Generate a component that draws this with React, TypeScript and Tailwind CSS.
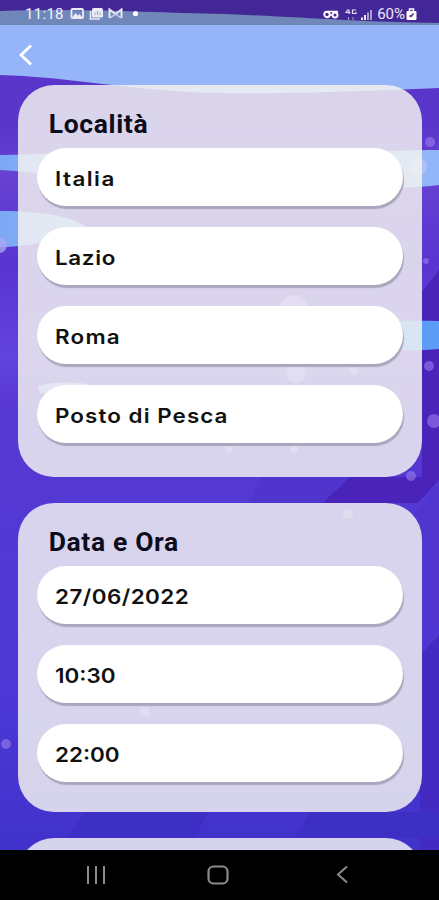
import type { ReactNode } from "react";

const sections = [
  { title: "Località", pad: "pb-[34px]", fields: ["Italia", "Lazio", "Roma", "Posto di Pesca"] },
  { title: "Data e Ora", pad: "pb-[30px]", fields: ["27/06/2022", "10:30", "22:00"] },
];

const spacing: Record<string, string> = {
  Italia: "tracking-[1.3px]",
  Lazio: "tracking-[0.6px]",
  Roma: "tracking-[1.1px]",
  "Posto di Pesca": "tracking-[0.95px]",
  "27/06/2022": "tracking-[0.4px]",
  "10:30": "tracking-[0px]",
  "22:00": "tracking-[0px]",
};

function Waves() {
  return (
    <svg className="absolute inset-0 h-[850px] w-full" viewBox="0 0 439 850" preserveAspectRatio="none" aria-hidden="true">
      <defs>
        <linearGradient id="sea" x1="0" y1="0" x2="0" y2="1">
          <stop offset="0" stopColor="#5b34c8" />
          <stop offset="0.15" stopColor="#5a36cc" />
          <stop offset="0.2" stopColor="#6742d2" />
          <stop offset="0.31" stopColor="#5934d0" />
          <stop offset="0.42" stopColor="#6144dc" />
          <stop offset="0.48" stopColor="#5738d2" />
          <stop offset="0.8" stopColor="#4e39d6" />
          <stop offset="1" stopColor="#4132cc" />
        </linearGradient>
        <linearGradient id="left" x1="0" y1="0" x2="1" y2="0">
          <stop offset="0" stopColor="#7ba7f4" />
          <stop offset="1" stopColor="#94b8f8" />
        </linearGradient>
      </defs>
      <rect width="439" height="850" fill="url(#sea)" />
      {/* darker bands on the right */}
      <path d="M439 270 L422 292 V477 H350 L322 503 H418 L439 480Z" fill="#4a24b9" />
      <path d="M260 477 L250 503 H322 L350 477Z" fill="#5035cc" />
      <path d="M439 484 L415 512 V690 L439 625Z" fill="#5036ce" />
      <path d="M439 635 L420 655 V850 H439Z" fill="#432bc1" />
      <path d="M85 812 L68 838 H195 L208 812Z M310 812 L295 838 H439 V812Z" fill="#3d2fc3" />
      {/* surface */}
      <path d="M0 11 C90 8 150 13 225 14 C300 17 360 22 439 23 V88 C350 92 250 95 190 92 C110 87 65 77 0 75Z" fill="#96b4f8" />
      <path d="M0 155 C20 155 45 153 90 154 V178 C45 174 20 171 0 170Z" fill="url(#left)" />
      <path d="M0 211 C45 211 75 217 88 229 C55 242 25 247 0 247Z" fill="url(#left)" />
      <path d="M350 152 C390 151 415 150 439 150 V185 C410 189 380 187 350 186Z" fill="#92b5f8" />
      <path d="M350 325 C380 321 410 320 439 321 V349 C405 352 380 350 350 350Z" fill="#5d9cf6" />
      <path d="M38 386 C55 381 85 381 104 389 L40 393Z" fill="#94a5f5" />
      {/* bubbles */}
      <g fill="#9a79ee" fillOpacity="0.62">
        <circle cx="430" cy="142" r="5" />
        <circle cx="426" cy="261" r="3" />
        <circle cx="429" cy="366" r="5" />
        <circle cx="434" cy="421" r="7" />
        <circle cx="411" cy="476" r="5" />
        <circle cx="6" cy="744" r="5" />
      </g>
      <circle cx="418" cy="167" r="9" fill="#b4c4f8" fillOpacity="0.8" />
      <circle cx="-1" cy="245" r="8" fill="#a9a6f4" fillOpacity="0.8" />
      <g fill="#b5a0fa" fillOpacity="0.5">
        <circle cx="294" cy="309" r="14" />
        <circle cx="296" cy="373" r="10" />
        <circle cx="348" cy="514" r="5" />
        <circle cx="145" cy="712" r="5" />
        <circle cx="229" cy="448" r="4" />
        <circle cx="294" cy="449" r="4" />
        <circle cx="354" cy="370" r="4" />
      </g>
    </svg>
  );
}

function StatusBar() {
  return (
    <div className="flex h-[25px] items-center bg-black/25 pl-[25px] pr-[22px] font-[Roboto,sans-serif] text-[15px] leading-none text-white/90">
      <span className="w-[45px] pt-[4px] tracking-[0.3px]">11:18</span>
      <svg className="mt-[3px]" width="70" height="14" viewBox="0 0 70 14" fill="none">
        <rect x="1.5" y="2" width="11.5" height="9" rx="1" stroke="#eceaf7" strokeWidth="1.8" />
        <path d="M2.5 10 L5.5 6 L8 8.5 L9.5 7 L12 10Z" fill="#eceaf7" />
        <path d="M20.5 4 V12 H30" stroke="#eceaf7" strokeWidth="1.6" />
        <rect x="22" y="1" width="11" height="9.5" rx="1.5" fill="#eceaf7" />
        <path d="M25 8 V5.5 M27.5 8 V4 M30 8 V5.5" stroke="#9aa0c8" strokeWidth="1" />
        <path d="M39.5 11 V2.5 L45.5 7 L51.5 2.5 V11" stroke="#eceaf7" strokeWidth="1.9" />
        <path d="M40 11 L45.5 7 L51 11" stroke="#d4d6ec" strokeWidth="1.3" />
        <circle cx="65.5" cy="6.5" r="2.6" fill="#fff" />
      </svg>
      <div className="ml-auto flex items-center">
        <svg className="mt-[4px] mr-[4px]" width="50" height="14" viewBox="0 0 50 14" fill="none">
          <circle cx="4" cy="6.5" r="2.7" stroke="#fff" strokeWidth="1.9" />
          <path d="M5 3.5 H15 M6.5 7 H9" stroke="#fff" strokeWidth="1.5" />
          <circle cx="12" cy="7" r="2.5" stroke="#fff" strokeWidth="1.9" />
          <path d="M25 1.5 L23 4.5 H27.5 M26 1.5 V6 M33 2 H29.5 V5.5 H33 V4" stroke="#e4def5" strokeWidth="1.2" />
          <path d="M25.5 9 V12 M30 9 V12" stroke="#aaa0d0" strokeWidth="1" />
          <path d="M39 9.5 V12 M42 7 V12" stroke="#fff" strokeWidth="1.8" />
          <path d="M45 4.5 V12 M48 2 V12" stroke="#b7addb" strokeWidth="1.8" />
        </svg>
        <span className="pt-[4px]">60%</span>
        <svg className="mt-[4px] ml-[1px]" width="11" height="13" viewBox="0 0 11 13" fill="none">
          <rect x="0.5" y="3" width="10" height="9" rx="1" fill="#fff" />
          <path d="M3.5 3 V1 H7.5 V3" stroke="#fff" strokeWidth="1.5" />
          <path d="M3.5 7.5 L5 8.5 L7.5 5.5" stroke="#493a80" strokeWidth="1.6" />
        </svg>
      </div>
    </div>
  );
}

function Card({ title, pad, children }: { title: string; pad: string; children?: ReactNode }) {
  return (
    <section className={`rounded-[36px] bg-[#f4f4f2]/83 px-[19px] pt-[23px] ${pad}`}>
      <h2 className="mb-[7px] origin-left scale-x-[1.06] pl-[11px] font-[Roboto,sans-serif] text-[25px] leading-[33px] font-bold tracking-[0.6px] text-[#0c0c1a]">{title}</h2>
      <div className="flex flex-col gap-[21px]">{children}</div>
    </section>
  );
}

export default function App() {
  return (
    <div className="relative flex h-[900px] w-full flex-col overflow-hidden bg-[#5738d2]">
      <Waves />
      <div className="relative flex min-h-0 flex-1 flex-col">
        <StatusBar />
        <header className="flex h-[60px] shrink-0 items-center pl-[18px]">
          <button aria-label="Indietro">
            <svg width="16" height="22" viewBox="0 0 16 22" fill="none" stroke="#fff" strokeWidth="2.8">
              <path d="M13 1.5 L3 11 L13 20.5" />
            </svg>
          </button>
        </header>
        <main className="flex min-h-0 flex-1 flex-col gap-[26px] overflow-hidden pl-[18px] pr-[17px] *:shrink-0">
          {sections.map((s) => (
            <Card key={s.title} title={s.title} pad={s.pad}>
              {s.fields.map((f) => (
                <div key={f} className="flex h-[58px] items-center rounded-full bg-white pt-[3px] pl-[18px] font-[Inter,sans-serif] text-[20px] font-semibold text-[#111] shadow-[1px_3px_1px_#aaa6bd]">
                  <span className={`origin-left scale-x-[1.12] ${spacing[f]}`}>{f}</span>
                </div>
              ))}
            </Card>
          ))}
          <section className="h-[200px] rounded-[36px] bg-[#f4f4f2]/83" />
        </main>
      </div>
      <nav className="relative flex h-[50px] shrink-0 items-center justify-between bg-black pl-[85px] pr-[90px]">
        <svg width="22" height="22" viewBox="0 0 22 22" stroke="#8c8c8c" strokeWidth="2">
          <path d="M3 2 V20 M11 2 V20 M19 2 V20" />
        </svg>
        <svg className="-ml-[6px]" width="24" height="22" viewBox="0 0 24 22" fill="none" stroke="#8c8c8c" strokeWidth="2.2">
          <rect x="2.5" y="2.5" width="19" height="17" rx="5" />
        </svg>
        <svg width="14" height="22" viewBox="0 0 14 22" fill="none" stroke="#8c8c8c" strokeWidth="2">
          <path d="M12 2.5 L3 10.5 L12 18.5" />
        </svg>
      </nav>
    </div>
  );
}
